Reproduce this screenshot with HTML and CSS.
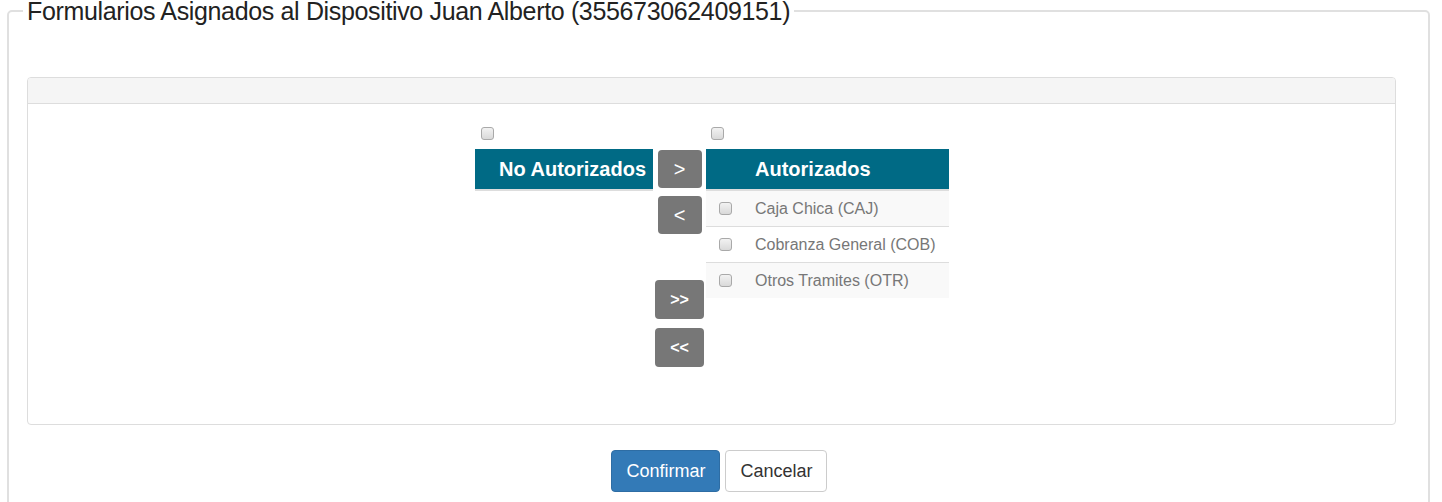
FILE: index.html
```html
<!DOCTYPE html>
<html lang="es">
<head>
<meta charset="utf-8">
<title>Formularios Asignados</title>
<link rel="stylesheet" href="styles.css">
</head>
<body>
<fieldset class="box">
  <legend class="box-title">Formularios Asignados al Dispositivo Juan Alberto (355673062409151)</legend>
  <div class="panel">
    <div class="panel-heading"></div>
    <div class="panel-body">
      <div class="picker">
        <div class="col col-left">
          <div class="check-row"><input type="checkbox" class="chk"></div>
          <div class="list-head head-left">No Autorizados</div>
        </div>
        <div class="col col-mid">
          <button class="mv mv-one mv-first">&gt;</button>
          <button class="mv mv-one">&lt;</button>
          <button class="mv mv-all mv-gap">&gt;&gt;</button>
          <button class="mv mv-all">&lt;&lt;</button>
        </div>
        <div class="col col-right">
          <div class="check-row check-row-right"><input type="checkbox" class="chk"></div>
          <div class="list-head head-right">Autorizados</div>
          <div class="item odd"><input type="checkbox" class="chk"><span>Caja Chica (CAJ)</span></div>
          <div class="item"><input type="checkbox" class="chk"><span>Cobranza General (COB)</span></div>
          <div class="item odd"><input type="checkbox" class="chk"><span>Otros Tramites (OTR)</span></div>
        </div>
      </div>
    </div>
  </div>
  <div class="actions">
    <button class="btn btn-primary">Confirmar</button>
    <button class="btn btn-default">Cancelar</button>
  </div>
</fieldset>
</body>
</html>
```
FILE: styles.css
```css
html, body {
  margin: 0;
  padding: 0;
  background: #fff;
  font-family: "Liberation Sans", Arial, sans-serif;
  color: #333;
}
.box {
  margin: 0 12px 0 7px;
  border: 2px solid #e0e0e0;
  border-radius: 5px;
  padding: 0 32px 40px 18px;
  min-height: 520px;
}
.box-title {
  font-size: 25px;
  letter-spacing: -0.35px;
  line-height: 22px;
  padding: 0 4px;
  margin-left: -4px;
  color: #222;
}
.panel {
  margin-top: 55px;
  border: 1px solid #ddd;
  border-radius: 4px;
  height: 348px;
  box-sizing: border-box;
  overflow: hidden;
}
.panel-heading {
  height: 25px;
  background: #f5f5f5;
  border-bottom: 1px solid #ddd;
}
.panel-body {
  padding-top: 23px;
  display: flex;
  justify-content: center;
}
.picker {
  display: flex;
  margin-left: 1px;
}
.col { display: flex; flex-direction: column; }
.col-left { width: 178px; }
.col-mid { width: 53px; align-items: center; padding-top: 22px; }
.col-right { width: 243px; }
.check-row {
  height: 22px;
  padding-left: 6px;
}
.check-row-right { padding-left: 5px; }
.chk {
  -webkit-appearance: none;
  appearance: none;
  width: 13px;
  height: 13px;
  margin: 0;
  border: 1px solid #a9a9a9;
  border-radius: 3px;
  background: linear-gradient(#f2f2f2, #d9d9d9);
  box-sizing: border-box;
  display: block;
}
.list-head {
  height: 40px;
  background: #006a85;
  color: #fff;
  font-weight: bold;
  font-size: 20px;
  line-height: 40px;
  border-bottom: 2px solid #ddd;
}
.head-left { padding-left: 24px; }
.head-right { padding-left: 49px; }
.mv {
  background: #777;
  color: #fff;
  border: none;
  border-radius: 4px;
  font-family: "Liberation Sans", Arial, sans-serif;
  font-size: 20px;
  padding: 0;
  height: 38px;
  margin-bottom: 8px;
  cursor: pointer;
}
.mv-first { margin-top: 1px; }
.mv-one { width: 44px; }
.mv-all { width: 49px; height: 39px; font-size: 16px; font-weight: bold; margin-bottom: 9px; }
.mv-gap { margin-top: 38px; }
.item {
  height: 35px;
  display: flex;
  align-items: center;
  padding-left: 13px;
  background: #fff;
  color: #777;
  font-size: 16px;
  border-top: 1px solid #ddd;
}
.list-head + .item { border-top: none; }
.item.odd { background: #f9f9f9; }
.item .chk { margin-right: 23px; }
.actions {
  display: flex;
  justify-content: center;
  gap: 5px;
  margin-top: 25px;
  padding-left: 14px;
}
.btn {
  font-family: "Liberation Sans", Arial, sans-serif;
  font-size: 18px;
  height: 42px;
  border-radius: 4px;
  padding: 0 15px;
  cursor: pointer;
}
.btn-primary {
  background: #337ab7;
  border: 1px solid #2e6da4;
  color: #fff;
  width: 109px;
}
.btn-default {
  background: #fff;
  border: 1px solid #ccc;
  color: #333;
  width: 102px;
}
```
